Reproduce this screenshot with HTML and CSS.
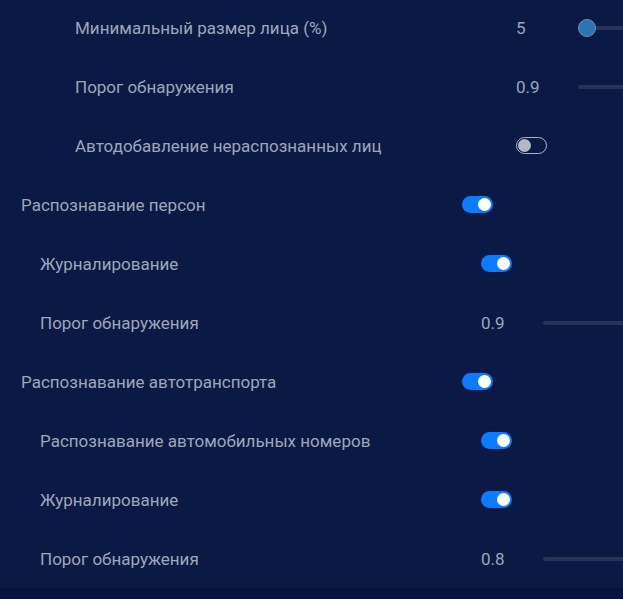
FILE: index.html
```html
<!DOCTYPE html>
<html lang="ru">
<head>
<meta charset="utf-8">
<link rel="stylesheet" href="styles.css">
</head>
<body>
<div class="page">
  <div class="list">
    <div class="row lvl2">
      <div class="label">Минимальный размер лица (%)</div>
      <div class="value">5</div>
      <div class="slider"><span class="thumb"></span></div>
    </div>
    <div class="row lvl2">
      <div class="label">Порог обнаружения</div>
      <div class="value">0.9</div>
      <div class="slider"></div>
    </div>
    <div class="row lvl2">
      <div class="label">Автодобавление нераспознанных лиц</div>
      <div class="value"><span class="switch off"></span></div>
    </div>
    <div class="row lvl0">
      <div class="label">Распознавание персон</div>
      <div class="value"><span class="switch on"></span></div>
    </div>
    <div class="row lvl1">
      <div class="label">Журналирование</div>
      <div class="value"><span class="switch on"></span></div>
    </div>
    <div class="row lvl1">
      <div class="label">Порог обнаружения</div>
      <div class="value">0.9</div>
      <div class="slider"></div>
    </div>
    <div class="row lvl0">
      <div class="label">Распознавание автотранспорта</div>
      <div class="value"><span class="switch on"></span></div>
    </div>
    <div class="row lvl1">
      <div class="label">Распознавание автомобильных номеров</div>
      <div class="value"><span class="switch on"></span></div>
    </div>
    <div class="row lvl1">
      <div class="label">Журналирование</div>
      <div class="value"><span class="switch on"></span></div>
    </div>
    <div class="row lvl1">
      <div class="label">Порог обнаружения</div>
      <div class="value">0.8</div>
      <div class="slider"></div>
    </div>
  </div>
  <div class="footer"></div>
</div>
</body>
</html>
```
FILE: styles.css
```css
html, body {
  margin: 0;
  padding: 0;
  height: 100%;
  overflow: hidden;
  background: #0b1a45;
}
.page {
  display: flex;
  flex-direction: column;
  height: 100%;
  font-family: Roboto, "Liberation Sans", sans-serif;
  font-size: 17px;
  font-weight: 400;
  color: #9ea6ba;
}
.list {
  margin-top: -2px;
  display: flex;
  flex-direction: column;
}
.row {
  height: 59px;
  display: flex;
  align-items: center;
  white-space: nowrap;
}
.lvl0 { padding-left: 21px; }
.lvl1 { padding-left: 40px; }
.lvl2 { padding-left: 75px; }
.label {
  width: 441px;
  flex: none;
}
.value {
  width: 62px;
  flex: none;
  display: flex;
  align-items: center;
}
.slider {
  flex: none;
  width: 300px;
  height: 4px;
  border-radius: 2px;
  background: #27345a;
  position: relative;
}
.thumb {
  position: absolute;
  left: 0;
  top: -7px;
  width: 16px;
  height: 16px;
  border-radius: 50%;
  background: #2f73b3;
  border: 1px solid #6b8fbd;
}
.switch {
  display: block;
  width: 31px;
  height: 17px;
  border-radius: 9px;
  box-sizing: border-box;
  position: relative;
}
.switch::after {
  content: "";
  position: absolute;
  top: 2px;
  width: 13px;
  height: 13px;
  border-radius: 50%;
}
.switch.on {
  background: #0b7bff;
}
.switch.on::after {
  right: 2px;
  background: #ffffff;
}
.switch.off {
  border: 1px solid #aeb4c0;
  background: transparent;
}
.switch.off::after {
  top: 1px;
  left: 1px;
  background: #b3b8c2;
}
.footer {
  flex: 1;
  background: #06133a;
}
```
